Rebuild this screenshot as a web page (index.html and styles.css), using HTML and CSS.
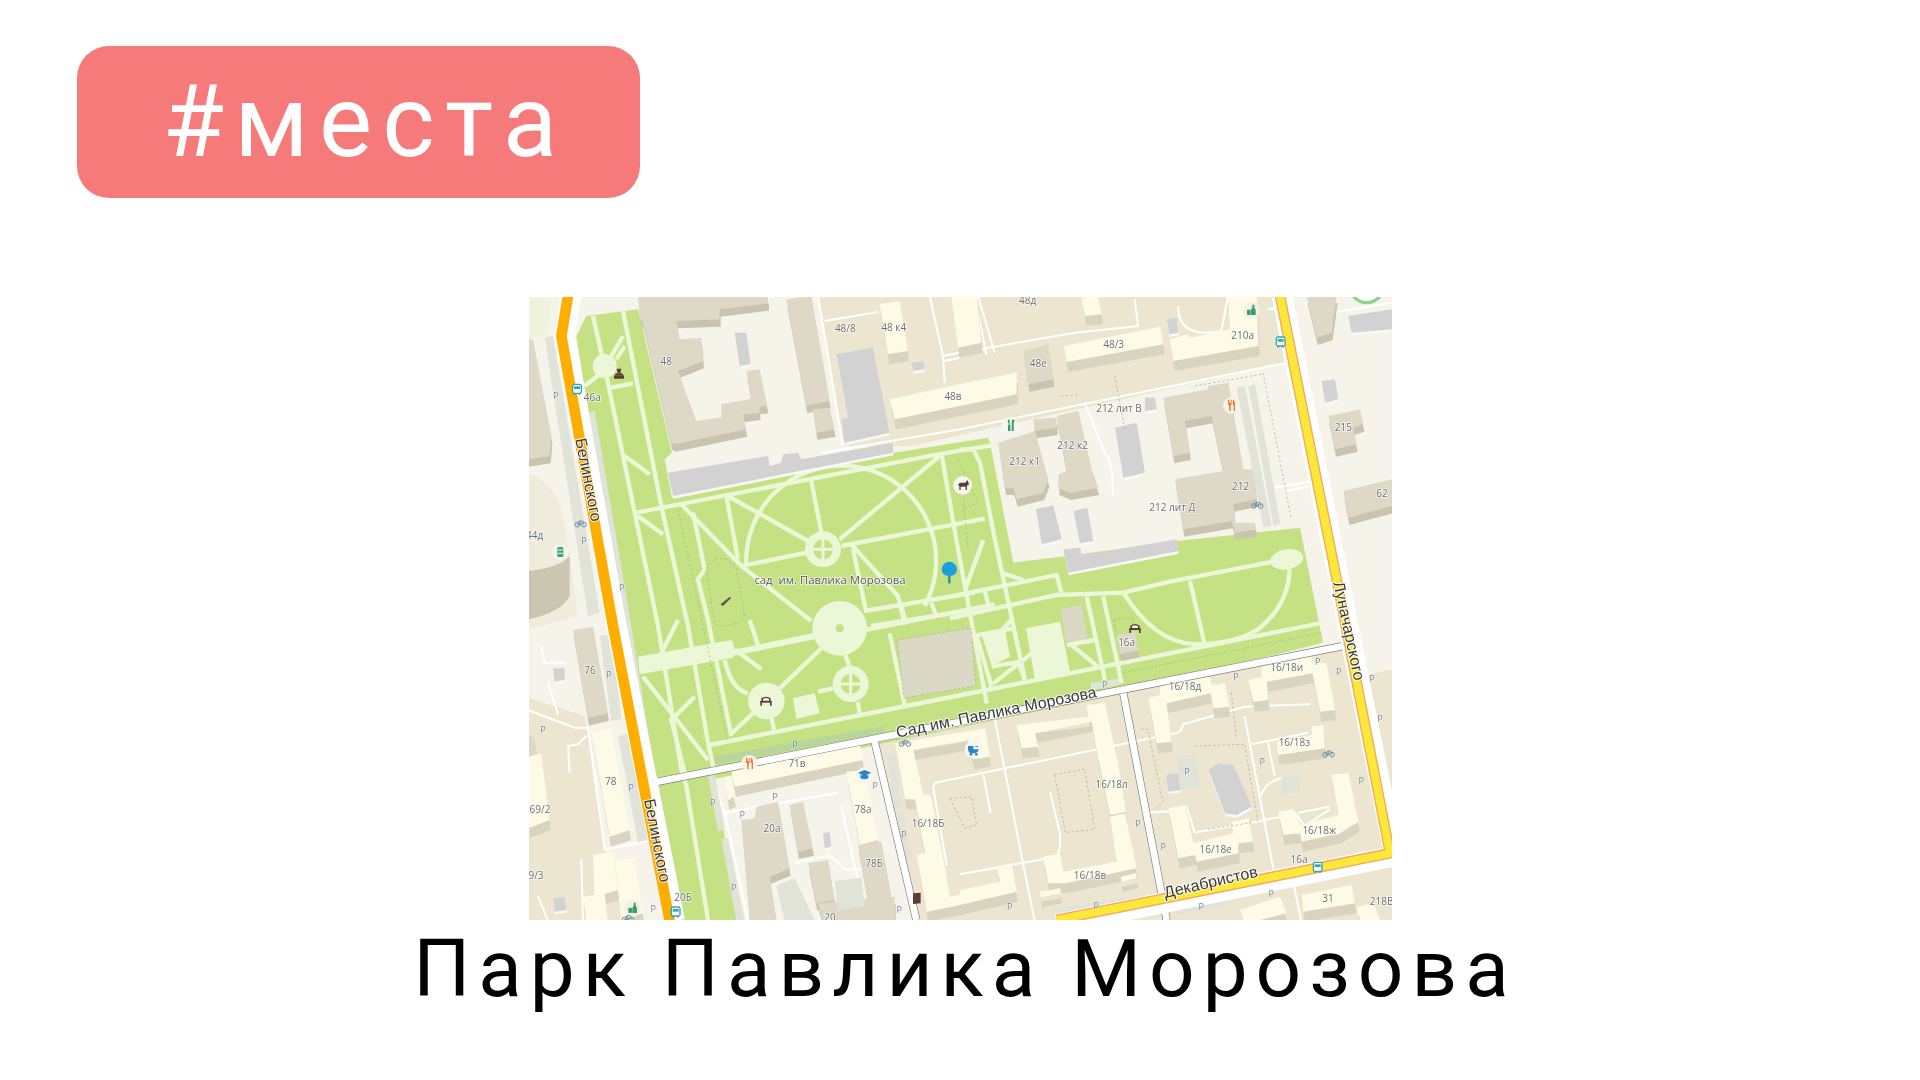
FILE: index.html
```html
<!DOCTYPE html>
<html lang="ru">
<head>
<meta charset="utf-8">
<title>Парк Павлика Морозова</title>
<link rel="stylesheet" href="styles.css">
</head>
<body>
<main class="slide">
  <div class="tag">#места</div>
  <svg class="map" viewBox="3 3 2589 1869" role="img" aria-label="Карта">
    <defs>
      <g id="bus"><rect x="-13" y="-15" width="26" height="27" rx="5" fill="#fff" stroke="#35a6b0" stroke-width="4"/><rect x="-9" y="-9" width="18" height="8" fill="#35a6b0"/><circle cx="-7" cy="14" r="3" fill="#35a6b0"/><circle cx="7" cy="14" r="3" fill="#35a6b0"/></g>
      <g id="bench" fill="#5a3d35"><path d="M-14,-8Q0,-18 14,-8V2H-14Z"/><rect x="-18" y="0" width="36" height="5"/><rect x="-17" y="4" width="5" height="10"/><rect x="12" y="4" width="5" height="10"/><path d="M-9,-6Q0,-12 9,-6V-1H-9Z" fill="#f3f8e3"/></g>
      <g id="fork" fill="#e07b39"><circle r="25" fill="#f7f1e6"/><path d="M-10,-17V-5Q-10,-2 -7,0L-6,17H-2L-2,0Q1,-2 1,-5V-17H-1V-7H-3V-17H-5V-7H-7V-17Z"/><path d="M6,-17Q11,-14 11,-4V17H7V-1H4V-10Q4,-15 6,-17Z"/></g>
      <g id="bottles" fill="#3f9c6a"><circle r="25" fill="#f1f1e6"/><rect x="-13" y="-3" width="11" height="16" rx="3"/><path d="M3,-18H9V-9L13,-3V13H-1V-3L3,-9Z"/></g>
      <g id="bike" fill="none" stroke="#6e8fa8" stroke-width="3"><circle cx="-10" cy="4" r="7"/><circle cx="10" cy="4" r="7"/><path d="M-10,4L-3,-7H6L10,4M-3,-7L1,4H-10"/></g>
      <g id="ring"><circle r="54" class="path-fill"/><circle r="30" class="park-fill"/><path d="M-34,0H34M0,-34V34" class="pth pth-s"/></g>

      <g id="tans">
        <polygon points="330,0 720,0 720,22 575,40 575,70 445,75 455,130 520,125 525,195 450,225 505,375 645,355 655,400 440,445 430,440 345,80 335,60"/>
        <polygon points="655,225 695,220 718,330 675,335"/>
        <polygon points="580,325 690,305 695,350 580,365"/>
        <polygon points="775,10 850,0 905,315 835,330"/>
        <polygon points="855,340 905,335 920,400 865,410"/>
        <polygon points="0,130 15,130 70,420 65,480 0,490"/>
        <polygon points="1766,1017 1821,1007 1831,1062 1776,1074"/>
        <g transform="translate(1296 0)">
          <polygon points="190,165 265,145 280,250 205,265"/>
          <polygon points="115,440 225,405 265,550 250,590 170,610 160,575 135,575"/>
          <polygon points="290,360 355,345 395,520 415,575 330,590 295,575 295,535 320,525"/>
          <polygon points="220,370 290,365 290,395 225,405"/>
          <polygon points="610,305 745,280 745,270 805,260 850,520 880,520 890,610 820,625 825,680 885,680 888,700 825,710 815,675 670,700 645,550 790,525 755,360 675,375 690,470 640,480"/>
          <polygon points="1040,0 1130,0 1115,110 1070,125"/>
          <polygon points="1105,360 1200,340 1210,385 1180,395 1190,445 1125,460"/>
          <polygon points="1150,585 1296,550 1296,630 1165,665"/>
        </g>
        <g transform="translate(0 972)">
          <polygon points="135,30 195,20 240,280 180,295"/>
          <polygon points="0,340 20,360 40,510 0,520"/>
          <polygon points="640,600 680,595 685,560 750,545 785,745 725,770 745,900 665,900"/>
          <polygon points="785,555 825,545 855,685 810,695"/>
          <polygon points="840,730 900,720 920,840 865,850"/>
          <polygon points="990,675 1060,665 1085,800 1090,840 1020,840"/>
          <polygon points="870,850 1100,830 1100,900 885,900"/>
        </g>
      </g>

      <g id="creams">
        <polygon points="1055,25 1115,15 1140,165 1080,175"/>
        <polygon points="1085,310 1308,262 1466,230 1466,295 1100,370"/>
        <polygon points="1270,0 1346,0 1360,140 1290,155"/>
        <g transform="translate(1296 0)">
          <polygon points="365,5 415,0 425,55 375,60"/>
          <polygon points="312,150 600,92 610,145 320,198"/>
          <polygon points="630,130 685,115 690,125 810,100 805,0 890,0 895,150 640,195"/>
        </g>
        <g transform="translate(0 972)">
          <polygon points="190,335 250,325 305,630 245,650"/>
          <polygon points="0,410 40,400 65,600 0,625"/>
          <polygon points="195,705 255,695 270,810 200,830"/>
          <polygon points="260,720 320,715 345,880 280,900"/>
          <polygon points="165,830 230,820 240,900 175,900"/>
          <polygon points="610,450 995,365 1005,420 620,500"/>
          <polygon points="590,475 605,470 620,530 600,540"/>
          <polygon points="955,455 1010,450 1050,660 995,675"/>
        </g>
        <g transform="translate(996 1212)">
          <polygon points="105,130 375,85 390,170 340,178 325,120 160,150 190,285 212,285 245,450 270,590 330,578 300,615 200,635 170,465 195,458 165,298 135,298"/>
        </g>
        <g transform="translate(1296 972)">
          <polygon points="170,315 385,290 380,255 435,250 470,415 415,420 395,305 225,340 235,380 185,385"/>
          <polygon points="415,415 470,405 498,575 450,585"/>
          <polygon points="450,590 495,580 530,745 315,790 265,790 250,710 300,700 310,755 470,725"/>
          <polygon points="110,740 155,730 170,815 0,855 0,810 120,785"/>
          <polygon points="240,815 300,805 303,820 243,832"/>
          <polygon points="482,770 528,760 530,775 484,785"/>
          <polygon points="565,235 600,225 600,195 750,170 755,195 795,190 808,260 760,265 752,220 620,250 635,365 590,370"/>
          <polygon points="865,180 905,170 905,140 1055,108 1060,125 1100,130 1125,270 1080,275 1058,160 920,185 925,240 880,245"/>
          <polygon points="625,565 675,555 700,670 820,640 815,605 865,595 880,665 835,670 835,700 710,725 705,705 655,715"/>
          <polygon points="955,575 1000,568 1020,615 1135,585 1115,465 1165,458 1195,605 1140,640 1025,665 1020,640 970,645"/>
          <polygon points="1025,825 1175,795 1185,850 1030,875"/>
          <polygon points="1190,860 1240,850 1260,900 1200,900"/>
          <polygon points="840,870 900,850 960,830 980,880 900,900 850,900"/>
          <polygon points="950,365 1055,345 1055,320 1090,315 1095,385 955,405"/>
        </g>
      </g>

      <g id="grays">
        <polygon points="620,110 655,110 668,205 635,210"/>
        <polygon points="925,175 1035,155 1085,410 950,440 940,370 960,365"/>
        <polygon points="420,530 720,480 725,510 760,500 765,475 810,470 820,490 1095,440 1095,470 435,600"/>
        <polygon points="1150,200 1185,195 1190,220 1155,225"/>
        <g transform="translate(1296 0)">
          <polygon points="620,70 650,65 655,110 628,115"/>
          <polygon points="465,395 530,380 555,530 490,545"/>
          <polygon points="228,640 280,628 305,730 245,745"/>
          <polygon points="340,645 382,635 400,735 360,742"/>
          <polygon points="310,760 360,755 365,775 415,770 650,730 655,765 325,830"/>
          <polygon points="555,305 585,305 590,340 555,345"/>
          <polygon points="1165,60 1296,40 1296,100 1175,110"/>
          <polygon points="1085,255 1125,250 1135,310 1095,320"/>
        </g>
        <g transform="translate(0 972)">
          <polygon points="75,145 110,145 110,180 80,185"/>
          <polygon points="75,835 110,830 115,870 80,875"/>
          <polygon points="885,640 905,635 910,680 890,685"/>
        </g>
        <g transform="translate(1296 972)">
          <polygon points="618,465 655,460 662,510 625,515"/>
          <polygon points="745,450 775,430 820,435 875,560 830,585 795,580"/>
        </g>
      </g>
    </defs>

    <!-- ground -->
    <rect x="0" y="0" width="2592" height="1875" class="light"/>
    <g class="beige">
      <polygon points="870,0 2240,0 2276,200 1150,450 945,450"/>
      <polygon points="1050,1340 2446,1045 2592,1672 2592,1875 1170,1875"/>
      <polygon points="0,1205 170,1260 230,1660 300,1875 0,1875"/>
      <polygon points="2500,1140 2592,1120 2592,1875 2560,1650"/>
    </g>
    <polygon class="pale" points="0,0 70,0 60,110 0,130"/>

    <!-- park -->
    <g class="park-fill">
      <path d="M145,120L175,60L330,40L432,470L410,490L432,604L1098,470L1380,425L1386,440L1456,800L1616,780L1950,735L2316,695L2385,1040L1786,1192L720,1415L365,1490Z"/>
      <polygon points="385,1472 560,1436 630,1872 440,1872"/>
    </g>
    <polygon class="parkstrip" points="555,1382 1070,1290 1070,1312 560,1405"/>
    <polygon class="lgray-fill" points="1686,1162 1771,1147 1774,1167 1691,1182"/>

    <!-- park paths -->
    <g class="pth">
      <path d="M195,60L240,260L390,990L460,1422L475,1470L540,1872"/>
      <path d="M285,45L400,630L480,990L540,1340L560,1430"/>
      <path d="M170,270L215,235M250,180L285,120M265,190L290,150M250,275L315,262M290,480L365,535M330,660L405,715"/>
      <path d="M325,650L1230,475L1440,440"/>
      <path d="M460,625L640,810L850,975"/>
      <path d="M495,650L530,820L510,850L540,972L610,1320"/>
      <path d="M595,600L630,790M600,600L840,735M850,555L880,710M935,730L1235,480"/>
      <path d="M1240,470L1285,732L1376,1222"/>
      <path d="M940,750L1370,668M640,810L835,770"/>
      <path d="M970,745L1110,900L1130,985M975,760L1015,950"/>
      <path d="M1010,945L1340,890M1030,990L1345,940M1120,930L1135,985M1210,920L1225,960"/>
      <path d="M655,810A285,285 0 1 1 1190,930"/>
      <path d="M345,1142L540,1392M500,1202L430,1272L470,1430M450,972L400,1072"/>
      <path d="M620,1060L700,1120"/>
      <path d="M665,972L695,1062M590,1092Q610,1180 660,1192"/>
      <path d="M880,1057L755,1177M675,1252L605,1317M730,1262L738,1302M950,1072L965,1112M990,1217L995,1257"/>
      <path d="M870,1187L915,1177M1010,1002L1400,925"/>
      <path d="M1085,1012L1130,1227"/>
      <path d="M545,1347L1376,1182L2380,981"/>
      <path d="M1266,902L1586,837L1601,892"/>
      <path d="M1266,967L1586,897L1786,890L1926,857L2246,795"/>
      <path d="M1296,460L1336,460L1356,500L1401,732L1491,1152"/>
      <path d="M1366,732L1311,882M1426,832L1486,852M1371,887L1386,947"/>
      <path d="M1326,1022L1456,997M1346,1022L1391,1172M1451,972L1421,1002"/>
      <path d="M1396,1162L1511,1072M1391,1112L1476,1097M1471,1102L1491,1152"/>
      <path d="M1616,1047L1701,1032M1631,1047L1716,1117M1676,902L1731,1152M1726,902L1781,1162"/>
      <path d="M1786,890Q1880,1040 2000,1045Q2120,1045 2190,1000Q2280,930 2285,820"/>
      <path d="M1986,855L2030,1045"/>
    </g>
    <g class="path-fill">
      <path d="M330,1082L610,1032Q622,1045 615,1085L335,1135Z"/>
      <path d="M615,1062L860,1010L860,1030L615,1080Z" />
      <circle cx="230" cy="210" r="36"/>
      <circle cx="935" cy="997" r="82"/>
      <circle cx="715" cy="1215" r="55"/>
      <polygon points="795,1207 860,1192 875,1252 805,1269"/>
      <polygon points="1494,997 1596,977 1626,1127 1521,1152"/>
      <polygon points="1361,1017 1431,1002 1446,1082 1391,1110"/>
      <ellipse cx="2276" cy="790" rx="50" ry="30" transform="rotate(-10 2276 790)"/>
    </g>
    <circle cx="935" cy="997" r="12" class="park-fill"/>
    <use href="#ring" x="885" y="760"/>
    <use href="#ring" x="968" y="1164"/>
    <g class="plaza">
      <polygon points="1107,1032 1329,996 1344,1170 1128,1206"/>
      <polygon points="1598,940 1661,927 1678,1027 1616,1042"/>
    </g>
    <g class="dash">
      <path d="M450,640L600,1340M1306,610L1320,760M1290,490L1350,620L1300,640M1786,1130L2380,1010"/>
      <path d="M535,820A55,80 -10 0 1 625,820L650,960A55,30 -10 0 1 560,985Z"/>
      <path d="M1756,972L1811,964L1818,1000M1756,972L1766,1017"/>
      <path d="M1107,1032L1329,996L1344,1170L1128,1206Z"/>
    </g>

    <!-- white service lanes -->
    <g class="lane">
      <path d="M870,0L945,450M880,470L1296,400L2276,200M890,75L1050,48M1205,0L1245,180L1250,260M1245,180L1320,165M1250,195L1296,185"/>
      <path d="M1296,170L1640,110L1830,90L1820,10M1340,0L1375,175M1350,0L1400,170"/>
      <path d="M1670,320L1730,470Q1755,490 1755,600M1950,30Q1950,130 2080,105L2100,0"/>
      <path d="M2220,40L2290,30M2350,60L2592,20M2280,585L2340,570"/>
      <path d="M0,1242L140,1295L180,1295L230,1660L360,1635M40,1050L50,1100L110,1100M60,1160L90,1255M120,1350L150,1345L175,1320M120,1350L125,1430"/>
      <path d="M160,1690L165,1875M30,1800L60,1875M550,1440L590,1550L930,1490M590,1550L660,1875"/>
      <path d="M940,1530L1000,1800M800,1700L900,1680Q920,1685 950,1720L1010,1720"/>
      <path d="M1216,1477Q1216,1457 1236,1457L1950,1310Q1960,1305 1965,1285L2150,1232L2346,1225M1216,1477L1256,1707M1366,1437L1388,1552M1401,1272L1486,1707L1520,1875M1566,1487L1596,1612Q1600,1660 1586,1682L1296,1735"/>
      <path d="M2150,1262L2240,1740M2170,1345L2340,1310M2220,1340L2240,1440M2290,1440Q2210,1450 2200,1500M2170,1580L2260,1562M2310,1550L2405,1532"/>
      <path d="M1860,1550L1930,1545M1975,1530L2000,1610L2110,1590M2300,1550L2330,1590L2405,1540"/>
      <path d="M2296,1760L2320,1875"/>
      <path d="M2220,580L2350,556"/>
    </g>

    <!-- buildings: shadow copy below, roof above -->
    <use href="#tans" class="tan-shadow" x="3" y="22"/>
    <use href="#creams" class="cream-shadow" x="4" y="30"/>
    <use href="#grays" class="gray-shadow" x="1" y="8"/>
    <path d="M0,530Q75,560 100,640L125,780L150,960L0,1000Z" class="round"/>
    <path d="M0,825Q95,815 125,780V900Q100,950 0,970Z" class="round-side"/>
    <use href="#tans" class="tan"/>
    <use href="#creams" class="cream"/>
    <use href="#grays" class="gray"/>
    <g class="dash dash-b">
      <path d="M1266,1507L1331,1502L1346,1587L1311,1597Z"/>
      <path d="M1580,1435L1670,1420L1700,1600L1612,1610Z"/>
      <path d="M1840,1300L1860,1300L1880,1400L1905,1520L1880,1540M2110,1190L2125,1330M2000,1350L2150,1345L2190,1580M2040,1600L2170,1580"/>
      <path d="M1760,240L1790,400M1600,300L1650,296M2205,230L2290,670M2000,270L2200,235"/>
    </g>

    <g class="lgray">
      <polygon points="2126,275 2151,270 2231,690 2206,695"/>
      <polygon points="2161,270 2181,265 2258,685 2236,690"/>
      <polygon points="50,125 75,120 215,950 180,960"/>
      <polygon points="180,350 200,345 310,990 380,1432 365,1440 290,990"/>
      <polygon points="1944,1377 2001,1377 2018,1472 1961,1482"/>
      <polygon points="2261,1442 2311,1432 2316,1487 2266,1497"/>
      <polygon points="1570,1840 1830,1800 1838,1830 1580,1875"/>
      <polygon points="1940,1830 2090,1805 2095,1830 1945,1855"/>
      <polygon points="215,1020 250,1015 280,1270 250,1275"/>
      <polygon points="270,1320 300,1315 360,1630 330,1640"/>
      <polygon points="540,1440 560,1435 590,1600 570,1605"/>
      <polygon points="580,1630 600,1625 650,1875 625,1875"/>
      <polygon points="745,1770 800,1745 860,1875 770,1875"/>
      <polygon points="920,1755 1000,1745 1010,1830 930,1845"/>
      <polygon points="1076,1377 1101,1372 1121,1537 1101,1542"/>
      <polygon points="1106,1552 1126,1547 1151,1692 1131,1692"/>
    </g>

    <!-- streets -->
    <g fill="none">
      <path class="st-edge" d="M365,1462L2446,1050"/>
      <path class="st-edge" d="M1040,1337L1165,1872M1786,1192L1916,1872"/>
      <path class="st-white" d="M365,1462L2446,1050"/>
      <path class="st-white" d="M1040,1337L1165,1872M1786,1192L1916,1872"/>
      <path class="rd-white" d="M128,0L110,120L265,990L440,1875"/>
      <path class="rd-orange" d="M120,0L100,120L255,990L425,1875"/>
      <path class="rd-white" d="M2262,0L2432,850L2600,1680L1586,1885"/>
      <path class="rd-edge" d="M2256,0L2426,850L2586,1672L1586,1872"/>
      <path class="rd-yellow" d="M2256,0L2426,850L2586,1672L1586,1872"/>
    </g>
    <circle cx="2516" cy="-30" r="50" class="ringgreen"/>

    <!-- labels -->
    <g class="lbl">
      <text x="415" y="206">48</text><text x="193" y="316">46а</text>
      <text x="952" y="108">48/8</text><text x="1097" y="104">48 к4</text><text x="1275" y="312">48в</text>
      <text x="20" y="728">44д</text>
      <g transform="translate(1296 0)">
        <text x="203" y="24">48д</text><text x="461" y="155">48/3</text><text x="848" y="130">210а</text><text x="235" y="212">48е</text>
        <text x="477" y="348">212 лит В</text><text x="338" y="458">212 к2</text><text x="194" y="506">212 к1</text><text x="842" y="581">212</text><text x="637" y="646">212 лит Д</text>
        <text x="1150" y="405">215</text><text x="1266" y="603">62</text>
      </g>
      <g transform="translate(0 972)">
        <text x="186" y="161">76</text><text x="248" y="496">78</text><text x="36" y="578">69/2</text><text x="24" y="776">9/3</text>
        <text x="807" y="440">71в</text><text x="1005" y="580">78а</text><text x="1038" y="742">78Б</text><text x="732" y="637">20а</text><text x="906" y="903">20</text><text x="465" y="843">20Б</text><text x="1200" y="621">16/18Б</text>
      </g>
      <g transform="translate(1296 972)">
        <text x="500" y="77">16а</text><text x="675" y="210">16/18д</text><text x="980" y="154">16/18и</text><text x="1003" y="377">16/18з</text>
        <text x="455" y="504">16/18л</text><text x="767" y="700">16/18е</text><text x="1078" y="641">16/18ж</text><text x="390" y="776">16/18в</text><text x="1017" y="729">16а</text><text x="1104" y="846">31</text><text x="1265" y="855">218В</text>
      </g>
    </g>
    <text class="parklbl" x="906" y="864">сад  им. Павлика Морозова</text>
    <g class="pk">
      <text x="83" y="308">P</text><text x="168" y="745">P</text><text x="281" y="884">P</text>
      <g transform="translate(0 972)">
        <text x="243" y="175">P</text><text x="45" y="339">P</text><text x="309" y="512">P</text><text x="801" y="384">P</text><text x="554" y="558">P</text><text x="741" y="540">P</text><text x="643" y="595">P</text><text x="1042" y="506">P</text><text x="1127" y="654">P</text><text x="617" y="813">P</text><text x="1114" y="880">P</text><text x="376" y="877">P</text>
      </g>
      <g transform="translate(1296 972)">
        <text x="434" y="205">P</text><text x="828" y="180">P</text><text x="1073" y="134">P</text><text x="1136" y="166">P</text><text x="1235" y="186">P</text><text x="1260" y="306">P</text><text x="681" y="464">P</text><text x="907" y="434">P</text><text x="1204" y="491">P</text><text x="534" y="621">P</text><text x="610" y="689">P</text><text x="795" y="789">P</text><text x="149" y="870">P</text><text x="409" y="866">P</text><text x="724" y="870">P</text><text x="934" y="830">P</text>
      </g>
    </g>
    <g class="street">
      <text transform="translate(142 430) rotate(79)">Белинского</text>
      <text transform="translate(348 1512) rotate(79)">Белинского</text>
      <text transform="translate(2416 860) rotate(78)">Луначарского</text>
      <text transform="translate(1108 1325) rotate(-11.5)">Сад им. Павлика Морозова</text>
      <text transform="translate(1912 1806) rotate(-13)">Декабристов</text>
    </g>

    <!-- markers -->
    <use href="#bus" x="147" y="280"/>
    <use href="#bus" x="2258" y="138"/>
    <use href="#bus" x="443" y="1848"/>
    <use href="#bus" x="2369" y="1714"/>
    <use href="#bench" x="714" y="1215"/>
    <use href="#bench" x="1821" y="997"/>
    <use href="#fork" x="2110" y="328"/>
    <use href="#fork" x="664" y="1402"/>
    <use href="#bottles" x="2170" y="44"/>
    <use href="#bottles" x="314" y="1838"/>
    <use href="#bike" x="158" y="682"/>
    <use href="#bike" x="2188" y="626"/>
    <use href="#bike" x="1131" y="1340"/>
    <use href="#bike" x="2402" y="1372"/>
    <use href="#bike" x="300" y="1866"/>
    <g class="round-w">
      <circle cx="97" cy="768" r="24"/>
      <circle cx="1304" cy="568" r="28"/>
      <circle cx="1447" cy="388" r="24"/>
      <circle cx="1009" cy="1440" r="26"/>
      <circle cx="1336" cy="1360" r="26"/>
    </g>
    <rect x="88" y="753" width="18" height="30" rx="3" class="ic-green"/>
    <path class="ic-green-s" d="M90,762H104M90,772H104"/>
    <path class="ic-dog" d="M1290,566L1296,560H1312L1318,552L1322,560V568H1317V582H1313V572H1298V582H1294V570Z"/>
    <path class="ic-tool" d="M1439,371H1445V385L1447,390V405H1440V390L1442,385ZM1452,371H1459V378H1457V405H1451V378H1452Z"/>
    <path class="ic-blue" d="M990,1430L1009,1422L1030,1430L1009,1440ZM997,1438H1021V1446Q1009,1454 997,1446Z"/>
    <path class="ic-blue" d="M1320,1350H1350V1354L1336,1350V1360H1352Q1350,1372 1336,1372H1328Q1320,1368 1320,1360Z"/>
    <circle cx="1329" cy="1375" r="4" class="ic-blue"/>
    <circle cx="1345" cy="1375" r="4" class="ic-blue"/>
    <path class="ic-skate" d="M578,925L606,902L609,906L587,928Q582,932 578,925Z"/>
    <rect x="262" y="232" width="22" height="6" class="ic-brown"/>
    <path class="ic-brown" d="M266,218H280L277,232H269ZM258,238H288V248H258Z"/>
    <path class="ic-brown" d="M1155,1792L1178,1790V1822L1155,1824Z"/>
    <path d="M1264,824L1264,862" class="pin-stem"/>
    <path d="M1241,820A23,23 0 0 1 1287,820Q1287,840 1264,840Q1241,840 1241,820Z" class="pin-head"/>
  </svg>
  <h1 class="title">Парк Павлика Морозова</h1>
</main>
</body>
</html>
```
FILE: styles.css
```css
html, body { margin: 0; padding: 0; background: #fff; }
.slide { width: 1920px; height: 1080px; overflow: hidden; display: flex; flex-direction: column; font-family: Roboto, sans-serif; }
.tag { align-self: flex-start; margin: 46px 0 0 77px; width: 563px; height: 152px; box-sizing: border-box; padding-left: 13px; display: flex; align-items: center; justify-content: center; background: #f77a7a; border-radius: 32px; color: #fff; font-size: 100px; line-height: 1; letter-spacing: 10.4px; }
.map { display: block; width: 863px; height: 623px; margin: 99px 0 0 529px; filter: blur(0.45px); }
.title { margin: 2px 0 0; padding-left: 10px; text-align: center; font-weight: 400; font-size: 80px; line-height: 94px; letter-spacing: 8px; color: #000; }

.light { fill: #f6f4ea; }
.beige polygon { fill: #ece6d1; }
.pale { fill: #eef3dc; }
.park-fill { fill: #c4e184; }
.parkstrip { fill: #b9d69a; }
.path-fill { fill: #ecf7d8; }
.lgray-fill { fill: #dfe5d4; }
.pth { fill: none; stroke: #ecf7d8; stroke-width: 13; }
.pth-s { stroke-width: 9; }
.plaza polygon { fill: #dcd8c6; }
.dash path { fill: none; stroke: #9fb47c; stroke-width: 2; stroke-dasharray: 7 7; }
.dash-b path { stroke: #a8a592; }
.lane { fill: none; stroke: #fff; stroke-width: 6; }
.tan { fill: #ddd9c6; }
.tan-shadow { fill: #c9c4af; }
.cream { fill: #fdfbe6; }
.cream-shadow { fill: #d9d4c0; }
.gray { fill: #d2d2d2; }
.gray-shadow { fill: #f8f8f4; }
.round { fill: #efecdc; }
.round-side { fill: #cbc6b1; }
.lgray polygon { fill: #e1e2d8; }
.st-edge { stroke: #80807c; stroke-width: 24; }
.st-white { stroke: #fff; stroke-width: 20; }
.rd-white { stroke: #fff; stroke-width: 62; }
.rd-orange { stroke: #ffae00; stroke-width: 32; }
.rd-edge { stroke: #f6a75c; stroke-width: 32; }
.rd-yellow { stroke: #fbe83a; stroke-width: 24; }
.ringgreen { fill: #fff; stroke: #8fd18f; stroke-width: 10; }
.lbl text { font-family: "Open Sans", sans-serif; font-size: 30px; fill: #6d6d6d; text-anchor: middle; paint-order: stroke; stroke: #fff; stroke-width: 5; stroke-opacity: .75; }
.parklbl { font-family: "Open Sans", sans-serif; font-size: 34px; fill: #555; text-anchor: middle; paint-order: stroke; stroke: #fff; stroke-width: 5; stroke-opacity: .8; white-space: pre; }
.pk text { font-family: "Open Sans", sans-serif; font-size: 27px; fill: #7389a8; text-anchor: middle; paint-order: stroke; stroke: #fff; stroke-width: 3; stroke-opacity: .5; }
.street text { font-family: "Liberation Sans", sans-serif; font-size: 48px; fill: #3a3a3a; paint-order: stroke; stroke: #fff; stroke-width: 6; stroke-opacity: .85; }
.round-w circle { fill: #f6f6ee; }
.ic-green { fill: #3fa877; }
.ic-green-s { stroke: #fff; stroke-width: 3; fill: none; }
.ic-dog { fill: #5a3d35; }
.ic-tool { fill: #35996b; }
.ic-blue { fill: #2588c8; }
.ic-skate { fill: #6b4a4a; }
.ic-brown { fill: #5a3d35; }
.pin-stem { stroke: #2a8f9c; stroke-width: 7; }
.pin-head { fill: #1e9fdb; }
```
